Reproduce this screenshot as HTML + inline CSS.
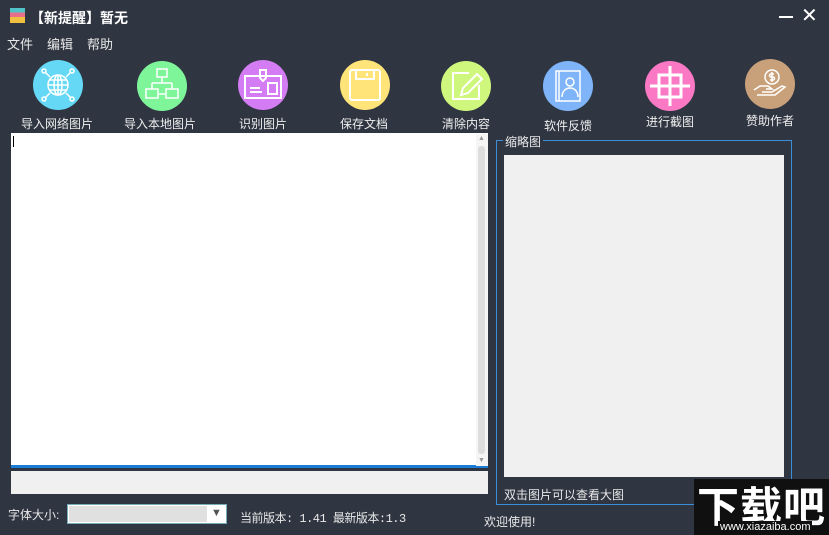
<!DOCTYPE html>
<html><head><meta charset="utf-8"><style>
body{margin:0;width:829px;height:535px;background:#2f3541;font-family:"Liberation Sans","Noto Sans CJK SC",sans-serif;color:#e8e8e8;position:relative;overflow:hidden;font-size:13px}
.a{position:absolute;white-space:nowrap}
.c{position:absolute;width:50px;height:50px;border-radius:50%}
.c svg{width:50px;height:50px}
.lbl{position:absolute;font-size:12px;color:#eee;text-align:center;width:100px}
</style></head><body>
<div class="a" style="left:10px;top:8px;width:15px;height:15px;background:linear-gradient(#4fc3c8 0 30%,#e86f8a 30% 60%,#f0c040 60%)"></div>
<div class="a" style="left:30px;top:8px;font-size:14px;font-weight:bold;color:#fff">【新提醒】暂无</div>
<div class="a" style="left:779px;top:16px;width:14px;height:2px;background:#fff"></div>
<div class="a" style="left:801px;top:3px;font-size:20px;color:#fff">✕</div>
<div class="a" style="left:7px;top:34px">文件</div>
<div class="a" style="left:47px;top:34px">编辑</div>
<div class="a" style="left:87px;top:34px">帮助</div>

<div class="c" style="left:33px;top:60px;background:#64d8f5"><svg viewBox="0 0 50 50" fill="none" stroke="#fff" stroke-width="1.5"><circle cx="25" cy="25" r="10"/><ellipse cx="25" cy="25" rx="4" ry="10"/><path d="M15 25h20M16 20h18M16 30h18M25 15v20M17 17l-5-5M33 17l5-5M17 33l-5 5M33 33l5 5"/><circle cx="11" cy="11" r="2"/><circle cx="39" cy="11" r="2"/><circle cx="11" cy="39" r="2"/><circle cx="39" cy="39" r="2"/></svg></div>
<div class="lbl" style="left:7px;top:115px">导入网络图片</div>
<div class="c" style="left:137px;top:61px;background:#7ff59a"><svg viewBox="0 0 50 50" fill="none" stroke="#fff" stroke-width="1.5"><rect x="20" y="8" width="10" height="8"/><path d="M25 16v6M15 22h20M15 22v6M35 22v6"/><rect x="9" y="28" width="12" height="9"/><rect x="29" y="28" width="12" height="9"/><path d="M22 33h6"/></svg></div>
<div class="lbl" style="left:110px;top:115px">导入本地图片</div>
<div class="c" style="left:238px;top:60px;background:#d47cf3"><svg viewBox="0 0 50 50" fill="none" stroke="#fff" stroke-width="2"><rect x="7" y="16" width="36" height="22"/><path d="M22 16v-6h6v8l-3 3-3-3z"/><path d="M12 28h10M12 32h12"/><rect x="30" y="23" width="9" height="11"/></svg></div>
<div class="lbl" style="left:213px;top:115px">识别图片</div>
<div class="c" style="left:340px;top:60px;background:#ffe47a"><svg viewBox="0 0 50 50" fill="none" stroke="#fff" stroke-width="2"><rect x="10" y="10" width="30" height="30" rx="2"/><path d="M16 10v9h18v-9M27 13v3"/></svg></div>
<div class="lbl" style="left:314px;top:115px">保存文档</div>
<div class="c" style="left:441px;top:61px;background:#cff67d"><svg viewBox="0 0 50 50" fill="none" stroke="#fff" stroke-width="2"><path d="M28 12H12v26h26V24"/><path d="M20 34l2-7 14-14 5 5-14 14z"/></svg></div>
<div class="lbl" style="left:416px;top:115px">清除内容</div>
<div class="c" style="left:543px;top:61px;background:#7fb5f8"><svg viewBox="0 0 50 50" fill="none" stroke="#fff" stroke-width="1.5"><rect x="13" y="10" width="24" height="30"/><path d="M16 10v30"/><circle cx="27" cy="21" r="4"/><path d="M19 36c0-6 4-9 8-9s8 3 8 9"/></svg></div>
<div class="lbl" style="left:518px;top:117px">软件反馈</div>
<div class="c" style="left:645px;top:61px;background:#fb79c4"><svg viewBox="0 0 50 50" fill="none" stroke="#fff" stroke-width="3"><rect x="14" y="14" width="22" height="22"/><path d="M25 5v40M5 25h40"/></svg></div>
<div class="lbl" style="left:620px;top:113px">进行截图</div>
<div class="c" style="left:745px;top:59px;background:#c8a07a"><svg viewBox="0 0 50 50" fill="none" stroke="#fff" stroke-width="1.5"><circle cx="27" cy="18" r="7"/><path d="M27 13v10M29 15h-3a1.5 1.5 0 000 3h2a1.5 1.5 0 010 3h-3"/><path d="M9 31l6-4h8l4 3h-6M17 33h10l10-6 3 1-10 8H12"/></svg></div>
<div class="lbl" style="left:720px;top:112px">赞助作者</div>

<div class="a" style="left:11px;top:133px;width:477px;height:335px;background:#fff;border-bottom:3px solid #1b7cd6;box-sizing:border-box"></div>
<div class="a" style="left:13px;top:136px;width:1px;height:11px;background:#000"></div>
<div class="a" style="left:476px;top:134px;width:12px;height:332px;background:#f5f5f5"></div>
<div class="a" style="left:478px;top:146px;width:7px;height:308px;background:#ddd;border-radius:3px"></div>
<div class="a" style="left:478px;top:135px;font-size:7px;color:#999">▲</div>
<div class="a" style="left:478px;top:457px;font-size:7px;color:#999">▼</div>
<div class="a" style="left:11px;top:471px;width:477px;height:23px;background:#f0f0f0"></div>

<div class="a" style="left:496px;top:140px;width:296px;height:365px;border:1px solid #3a8fd8;box-sizing:border-box"></div>
<div class="a" style="left:503px;top:133px;background:#2f3541;padding:0 2px;font-size:12px">缩略图</div>
<div class="a" style="left:504px;top:155px;width:280px;height:322px;background:#f0f0f0"></div>
<div class="a" style="left:504px;top:486px;font-size:12px">双击图片可以查看大图</div>

<div class="a" style="left:8px;top:506px;font-size:12px">字体大小:</div>
<div class="a" style="left:67px;top:504px;width:160px;height:20px;background:#fff;border:1px solid #7ab;box-sizing:border-box"></div>
<div class="a" style="left:69px;top:506px;width:138px;height:16px;background:#e0e0e0"></div>
<div class="a" style="left:211px;top:507px;font-size:11px;color:#555">▼</div>
<div class="a" style="left:240px;top:509px;font-size:12px;font-family:'Liberation Mono','Noto Sans CJK SC',monospace;letter-spacing:-0.5px">当前版本: 1.41 最新版本:1.3</div>
<div class="a" style="left:484px;top:513px;font-size:12px">欢迎使用!</div>

<div class="a" style="left:694px;top:479px;width:135px;height:56px;background:#101010"></div>
<div class="a" style="left:697px;top:474px;font-size:42px;font-weight:bold;color:#fff;letter-spacing:1px">下载吧</div>
<div class="a" style="left:718px;top:521px;font-size:11px;color:#fff;background:#101010;padding:0 2px">www.xiazaiba.com</div>
</body></html>
